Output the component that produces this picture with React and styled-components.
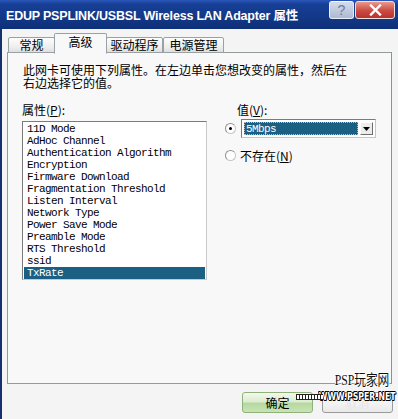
import React from "react";
import styled, { createGlobalStyle } from "styled-components";

const GlobalStyle = createGlobalStyle`
  html, body {
    margin: 0;
    padding: 0;
    background: #f2f2f2;
  }
  body {
    font-family: "Noto Sans CJK SC", "Liberation Sans", sans-serif;
    font-size: 12px;
    color: #000;
  }
`;

const properties = [
  "11D Mode",
  "AdHoc Channel",
  "Authentication Algorithm",
  "Encryption",
  "Firmware Download",
  "Fragmentation Threshold",
  "Listen Interval",
  "Network Type",
  "Power Save Mode",
  "Preamble Mode",
  "RTS Threshold",
  "ssid",
  "TxRate",
];

const tabs = [
  { label: "常规", width: 47 },
  { label: "高级", width: 53, active: true },
  { label: "驱动程序", width: 57 },
  { label: "电源管理", width: 61 },
];

export default function App() {
  return (
    <Window>
      <GlobalStyle />
      <TitleBar>
        <Title>EDUP PSPLINK/USBSL Wireless LAN Adapter 属性</Title>
        <TitleButtons>
          <HelpButton>?</HelpButton>
          <CloseButton>
            <svg width="13" height="12" viewBox="0 0 13 12">
              <path
                d="M2 1.5 L11 10.5 M11 1.5 L2 10.5"
                stroke="#fff"
                strokeWidth="2.4"
                strokeLinecap="square"
              />
            </svg>
          </CloseButton>
        </TitleButtons>
      </TitleBar>
      <Body>
        <TabStrip>
          {tabs.map((tab) => (
            <Tab key={tab.label} $active={tab.active} $width={tab.width}>
              {tab.label}
            </Tab>
          ))}
        </TabStrip>
        <Panel>
          <Description>
            此网卡可使用下列属性。在左边单击您想改变的属性，然后在
            <br />
            右边选择它的值。
          </Description>
          <Columns>
            <LeftColumn>
              <FieldLabel>
                属性(<u>P</u>):
              </FieldLabel>
              <ListBox>
                {properties.map((name) => (
                  <ListItem key={name} $selected={name === "TxRate"}>
                    {name}
                  </ListItem>
                ))}
              </ListBox>
            </LeftColumn>
            <RightColumn>
              <ValueLabel>
                值(<u>V</u>):
              </ValueLabel>
              <RadioRow>
                <Radio $checked />
                <Combo>
                  <ComboValue>
                    <ComboText>5Mbps</ComboText>
                  </ComboValue>
                  <ComboButton>
                    <svg width="7" height="4" viewBox="0 0 7 4">
                      <path d="M0 0 H7 L3.5 4 Z" fill="#000" />
                    </svg>
                  </ComboButton>
                </Combo>
              </RadioRow>
              <RadioRow $gap="4px">
                <Radio />
                <RadioText>
                  不存在(<u>N</u>)
                </RadioText>
              </RadioRow>
            </RightColumn>
          </Columns>
        </Panel>
        <ButtonBar>
          <PushButton $primary>确定</PushButton>
          <PushButton>取消</PushButton>
          <Watermark>
            <WatermarkTitle>PSP玩家网</WatermarkTitle>
            <WatermarkUrl>WWW.PSPER.NET</WatermarkUrl>
            <WatermarkCable />
          </Watermark>
        </ButtonBar>
      </Body>
    </Window>
  );
}

const Window = styled.div`
  width: 398px;
  height: 419px;
  overflow: hidden;
  display: flex;
  flex-direction: column;
  background: #f3f3f3;
`;

const TitleBar = styled.div`
  height: 29px;
  flex-shrink: 0;
  display: flex;
  justify-content: space-between;
  align-items: flex-start;
  background: linear-gradient(
    to bottom,
    #2a56b8 0%,
    #163f95 15%,
    #123887 60%,
    #0e2f78 100%
  );
`;

const Title = styled.div`
  padding: 9px 0 0 6px;
  color: #fff;
  font-family: "Liberation Sans", "Noto Sans CJK SC", sans-serif;
  font-weight: bold;
  font-size: 12.5px;
  line-height: 14px;
  letter-spacing: -0.2px;
  white-space: nowrap;
`;

const TitleButtons = styled.div`
  display: flex;
  gap: 1px;
  padding: 1px 3px 0 0;
`;

const HelpButton = styled.div`
  width: 25px;
  height: 18px;
  border: 1px solid #e8eef8;
  border-top-color: #f4f7fc;
  border-radius: 3px;
  background: linear-gradient(to bottom, #d4dcec, #aeb9d2);
  color: #6f7c99;
  font-family: "Liberation Sans", sans-serif;
  font-size: 14px;
  line-height: 16px;
  text-align: center;
  box-sizing: border-box;
`;

const CloseButton = styled.div`
  width: 40px;
  height: 18px;
  border: 1px solid #f0e0e0;
  border-radius: 3px;
  background: linear-gradient(to bottom, #ec9789, #c94a42 55%, #b8332d);
  display: flex;
  align-items: center;
  justify-content: center;
  box-sizing: border-box;
`;

const Body = styled.div`
  flex: 1;
  display: flex;
  flex-direction: column;
  border-left: 2px solid #15306c;
  padding: 4px 0 0 5px;
  background: #f4f4f4;
`;

const TabStrip = styled.div`
  display: flex;
  align-items: flex-end;
  height: 20px;
  padding-left: 1px;
  position: relative;
  z-index: 1;
`;

const Tab = styled.div`
  width: ${({ $width }) => $width}px;
  height: ${({ $active }) => ($active ? "21px" : "16px")};
  margin: ${({ $active }) => ($active ? "0 -1px -1px -1px" : "0")};
  box-sizing: border-box;
  border: 1px solid #9aa1a6;
  border-bottom: ${({ $active }) =>
    $active ? "1px solid #f8f8f8" : "1px solid #9aa1a6"};
  border-radius: 2px 2px 0 0;
  background: ${({ $active }) =>
    $active
      ? "#f8f8f8"
      : "linear-gradient(to bottom, #fdfdfd, #ececec 70%, #dedede)"};
  padding-top: ${({ $active }) => ($active ? "1px" : "0")};
  font-size: 12px;
  line-height: 14px;
  text-align: center;
  white-space: nowrap;
  position: relative;
  z-index: ${({ $active }) => ($active ? 2 : 1)};
`;

const Panel = styled.div`
  width: 385px;
  height: 332px;
  box-sizing: border-box;
  margin-top: -1px;
  border: 1px solid #919b9c;
  border-right-color: #8a9294;
  background: #f8f8f8;
  padding: 10px 0 0 14px;
  display: flex;
  flex-direction: column;
`;

const Description = styled.div`
  font-size: 12px;
  line-height: 13px;
  padding-left: 1px;
`;

const Columns = styled.div`
  display: flex;
  margin-top: 14px;
`;

const LeftColumn = styled.div`
  display: flex;
  flex-direction: column;
  width: 185px;
`;

const FieldLabel = styled.div`
  font-size: 12px;
  line-height: 13px;
  margin-bottom: 5px;

  u {
    text-underline-offset: 1px;
  }
`;

const ListBox = styled.div`
  box-sizing: border-box;
  width: 185px;
  height: 159px;
  border: 1px solid #7b7b7b;
  border-right-color: #c9c9c9;
  border-bottom-color: #c9c9c9;
  background: #fff;
  padding: 1px 1px 0 1px;
`;

const ListItem = styled.div`
  height: 12px;
  line-height: 12px;
  padding-left: 3px;
  font-family: "Liberation Mono", "DejaVu Sans Mono", monospace;
  font-size: 11px;
  letter-spacing: -0.6px;
  white-space: nowrap;
  background: ${({ $selected }) => ($selected ? "#1b5f82" : "transparent")};
  color: ${({ $selected }) => ($selected ? "#fff" : "#000")};
`;

const RightColumn = styled.div`
  display: flex;
  flex-direction: column;
  margin-left: 18px;
`;

const ValueLabel = styled(FieldLabel)`
  padding-left: 12px;
  margin-bottom: 3px;
`;

const RadioRow = styled.div`
  display: flex;
  align-items: center;
  gap: ${({ $gap }) => $gap || "5px"};
  margin-bottom: 11px;
`;

const Radio = styled.div`
  width: 11px;
  height: 11px;
  box-sizing: border-box;
  border-radius: 50%;
  border: 1px solid #c6c6c6;
  border-top-color: #8f8f8f;
  border-left-color: #8f8f8f;
  background: #fff;
  display: flex;
  align-items: center;
  justify-content: center;

  &::after {
    content: "";
    width: 3px;
    height: 3px;
    border-radius: 50%;
    background: ${({ $checked }) => ($checked ? "#000" : "transparent")};
  }
`;

const Combo = styled.div`
  width: 135px;
  height: 19px;
  box-sizing: border-box;
  border: 1px solid #7b7b7b;
  border-right-color: #c6c6c6;
  border-bottom-color: #c6c6c6;
  background: #fff;
  display: flex;
  padding: 2px;
`;

const ComboValue = styled.div`
  flex: 1;
  background: #1b5f82;
  outline: 1px dotted #bcbcbc;
  outline-offset: -1px;
  display: flex;
  align-items: center;
`;

const ComboText = styled.span`
  color: #fff;
  font-family: "Liberation Mono", "DejaVu Sans Mono", monospace;
  font-size: 11px;
  letter-spacing: -0.6px;
  padding-left: 2px;
`;

const ComboButton = styled.div`
  width: 13px;
  box-sizing: border-box;
  margin-left: 2px;
  border: 1px solid #fff;
  border-right-color: #6e6e6e;
  border-bottom-color: #6e6e6e;
  background: #ececec;
  display: flex;
  align-items: center;
  justify-content: center;
`;

const RadioText = styled.span`
  font-size: 12px;
  line-height: 13px;
`;

const ButtonBar = styled.div`
  display: flex;
  justify-content: flex-end;
  gap: 9px;
  padding: 8px 5px 0 0;
  position: relative;
`;

const PushButton = styled.div`
  width: 71px;
  height: 21px;
  box-sizing: border-box;
  border-radius: 3px;
  border: 1px solid ${({ $primary }) => ($primary ? "#8fb27a" : "#9a9a9a")};
  background: ${({ $primary }) =>
    $primary
      ? "linear-gradient(to bottom, #f3f9ee 0%, #dcecd0 45%, #b6d8a0 55%, #c9e3b7 100%)"
      : "linear-gradient(to bottom, #ffffff, #e9e9e9)"};
  font-size: 12px;
  line-height: 19px;
  text-align: center;
  color: ${({ $primary }) => ($primary ? "#000" : "#e6e6e6")};
`;

const Watermark = styled.div`
  position: absolute;
  right: 5px;
  top: -12px;
  width: 72px;
  display: flex;
  flex-direction: column;
  align-items: center;
`;

const WatermarkTitle = styled.div`
  font-family: "Liberation Serif", "Noto Sans CJK SC", serif;
  font-size: 15px;
  line-height: 17px;
  white-space: nowrap;
  margin-left: 10px;
  transform: scaleX(0.78);
  color: #111;
  text-shadow: 1px 0 0 #fff, -1px 0 0 #fff, 0 1px 0 #fff, 0 -1px 0 #fff;
`;

const WatermarkUrl = styled.div`
  margin-top: 2px;
  font-family: "DejaVu Sans", sans-serif;
  font-size: 10px;
  font-weight: bold;
  line-height: 11px;
  color: #fff;
  white-space: nowrap;
  transform: scaleX(0.78);
  text-shadow: 1px 0 0 #000, -1px 0 0 #000, 0 1px 0 #000, 0 -1px 0 #000,
    1px 1px 0 #000, -1px -1px 0 #000;
`;

const WatermarkCable = styled.div`
  position: absolute;
  left: -25px;
  top: 22px;
  width: 27px;
  height: 4px;
  border-top: 1px solid #222;
  border-bottom: 1px solid #222;
  background: repeating-linear-gradient(
    to right,
    #222 0 1px,
    #fff 1px 3px
  );
`;
